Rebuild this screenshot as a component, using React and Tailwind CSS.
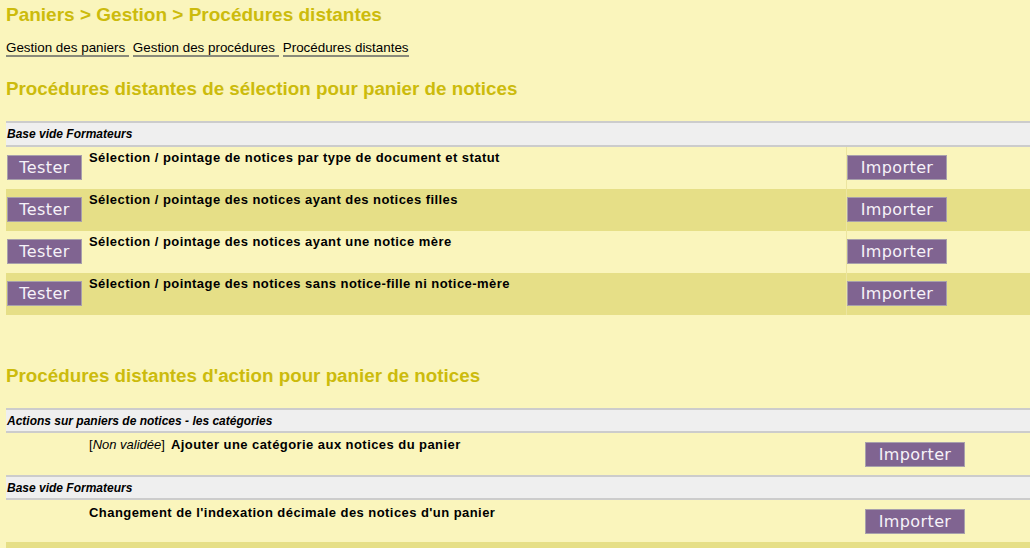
import React from "react";

const btn =
  "h-[25px] bg-[#806491] border border-[#a8a0ac] text-[#f6f2f8] text-[16px] leading-none tracking-[0.4px] font-['DejaVu_Sans',sans-serif] flex items-center justify-center";

const selections = [
  "Sélection / pointage de notices par type de document et statut",
  "Sélection / pointage des notices ayant des notices filles",
  "Sélection / pointage des notices ayant une notice mère",
  "Sélection / pointage des notices sans notice-fille ni notice-mère",
];

function GroupHeader({ label, tall }) {
  return (
    <div
      className={`${tall ? "h-[26px]" : "h-[25px]"} border-y-2 border-[#cccccc] bg-[#efefef] flex items-center pl-[1px]`}
    >
      <span className="text-[12px] leading-[14px] font-bold italic text-black">{label}</span>
    </div>
  );
}

export default function App() {
  return (
    <div className="min-h-[548px] bg-[#faf5bc] font-['Liberation_Sans',Arial,sans-serif] pt-[4px] overflow-hidden">
      <h1 className="pl-[6px] text-[19px] leading-[22px] font-bold text-[#ccbb0c]">
        Paniers &gt; Gestion &gt; Procédures distantes
      </h1>

      <div className="pl-[6px] mt-[14px] flex gap-[4px] text-[13.4px] leading-[15px] text-black">
        {["Gestion des paniers\u00a0", "Gestion des procédures\u00a0", "Procédures distantes"].map((l) => (
          <a key={l} className="border-b-2 border-[#8a8a7a] whitespace-pre">
            {l}
          </a>
        ))}
      </div>

      <h2 className="pl-[6px] mt-[21px] text-[18.8px] leading-[22px] font-bold text-[#ccbb0c]">
        Procédures distantes de sélection pour panier de notices
      </h2>

      <div className="ml-[6px] mt-[21px]">
        <GroupHeader label="Base vide Formateurs" tall />
        {selections.map((s, i) => (
          <div key={s} className={`h-[42px] flex ${i % 2 ? "bg-[#e6df87]" : "bg-[#faf5bc]"}`}>
            <div className="w-[80px] pl-[1px] pt-[8px]">
              <button className={`${btn} w-[75px]`}>Tester</button>
            </div>
            <div className="w-[760px] pl-[3px] pt-[3px] text-[13px] leading-[15px] font-bold tracking-[0.44px] text-black">
              {s}
            </div>
            <div className="flex-1 pt-[8px] border-l border-[#ece5a0]">
              <button className={`${btn} w-[100px]`}>Importer</button>
            </div>
          </div>
        ))}
      </div>

      <h2 className="pl-[6px] mt-[50px] text-[18.8px] leading-[22px] font-bold text-[#ccbb0c]">
        Procédures distantes d'action pour panier de notices
      </h2>

      <div className="ml-[6px] mt-[21px]">
        <GroupHeader label="Actions sur paniers de notices - les catégories" />
        <div className="h-[42px] flex bg-[#faf5bc]">
          <div className="w-[80px]" />
          <div className="w-[777px] pl-[3px] pt-[4px] text-[13px] leading-[15px] text-black">
            <span>
              [<i>Non validée</i>]
            </span>
            <span className="ml-[6px] font-bold tracking-[0.44px]">Ajouter une catégorie aux notices du panier</span>
          </div>
          <div className="flex-1 pl-[2px] pt-[9px]">
            <button className={`${btn} w-[100px]`}>Importer</button>
          </div>
        </div>
        <GroupHeader label="Base vide Formateurs" />
        <div className="h-[42px] flex bg-[#faf5bc]">
          <div className="w-[80px]" />
          <div className="w-[777px] pl-[3px] pt-[5px] text-[13px] leading-[15px] font-bold tracking-[0.44px] text-black">
            Changement de l'indexation décimale des notices d'un panier
          </div>
          <div className="flex-1 pl-[2px] pt-[9px]">
            <button className={`${btn} w-[100px]`}>Importer</button>
          </div>
        </div>
        <div className="h-[42px] bg-[#e6df87]" />
      </div>
    </div>
  );
}
